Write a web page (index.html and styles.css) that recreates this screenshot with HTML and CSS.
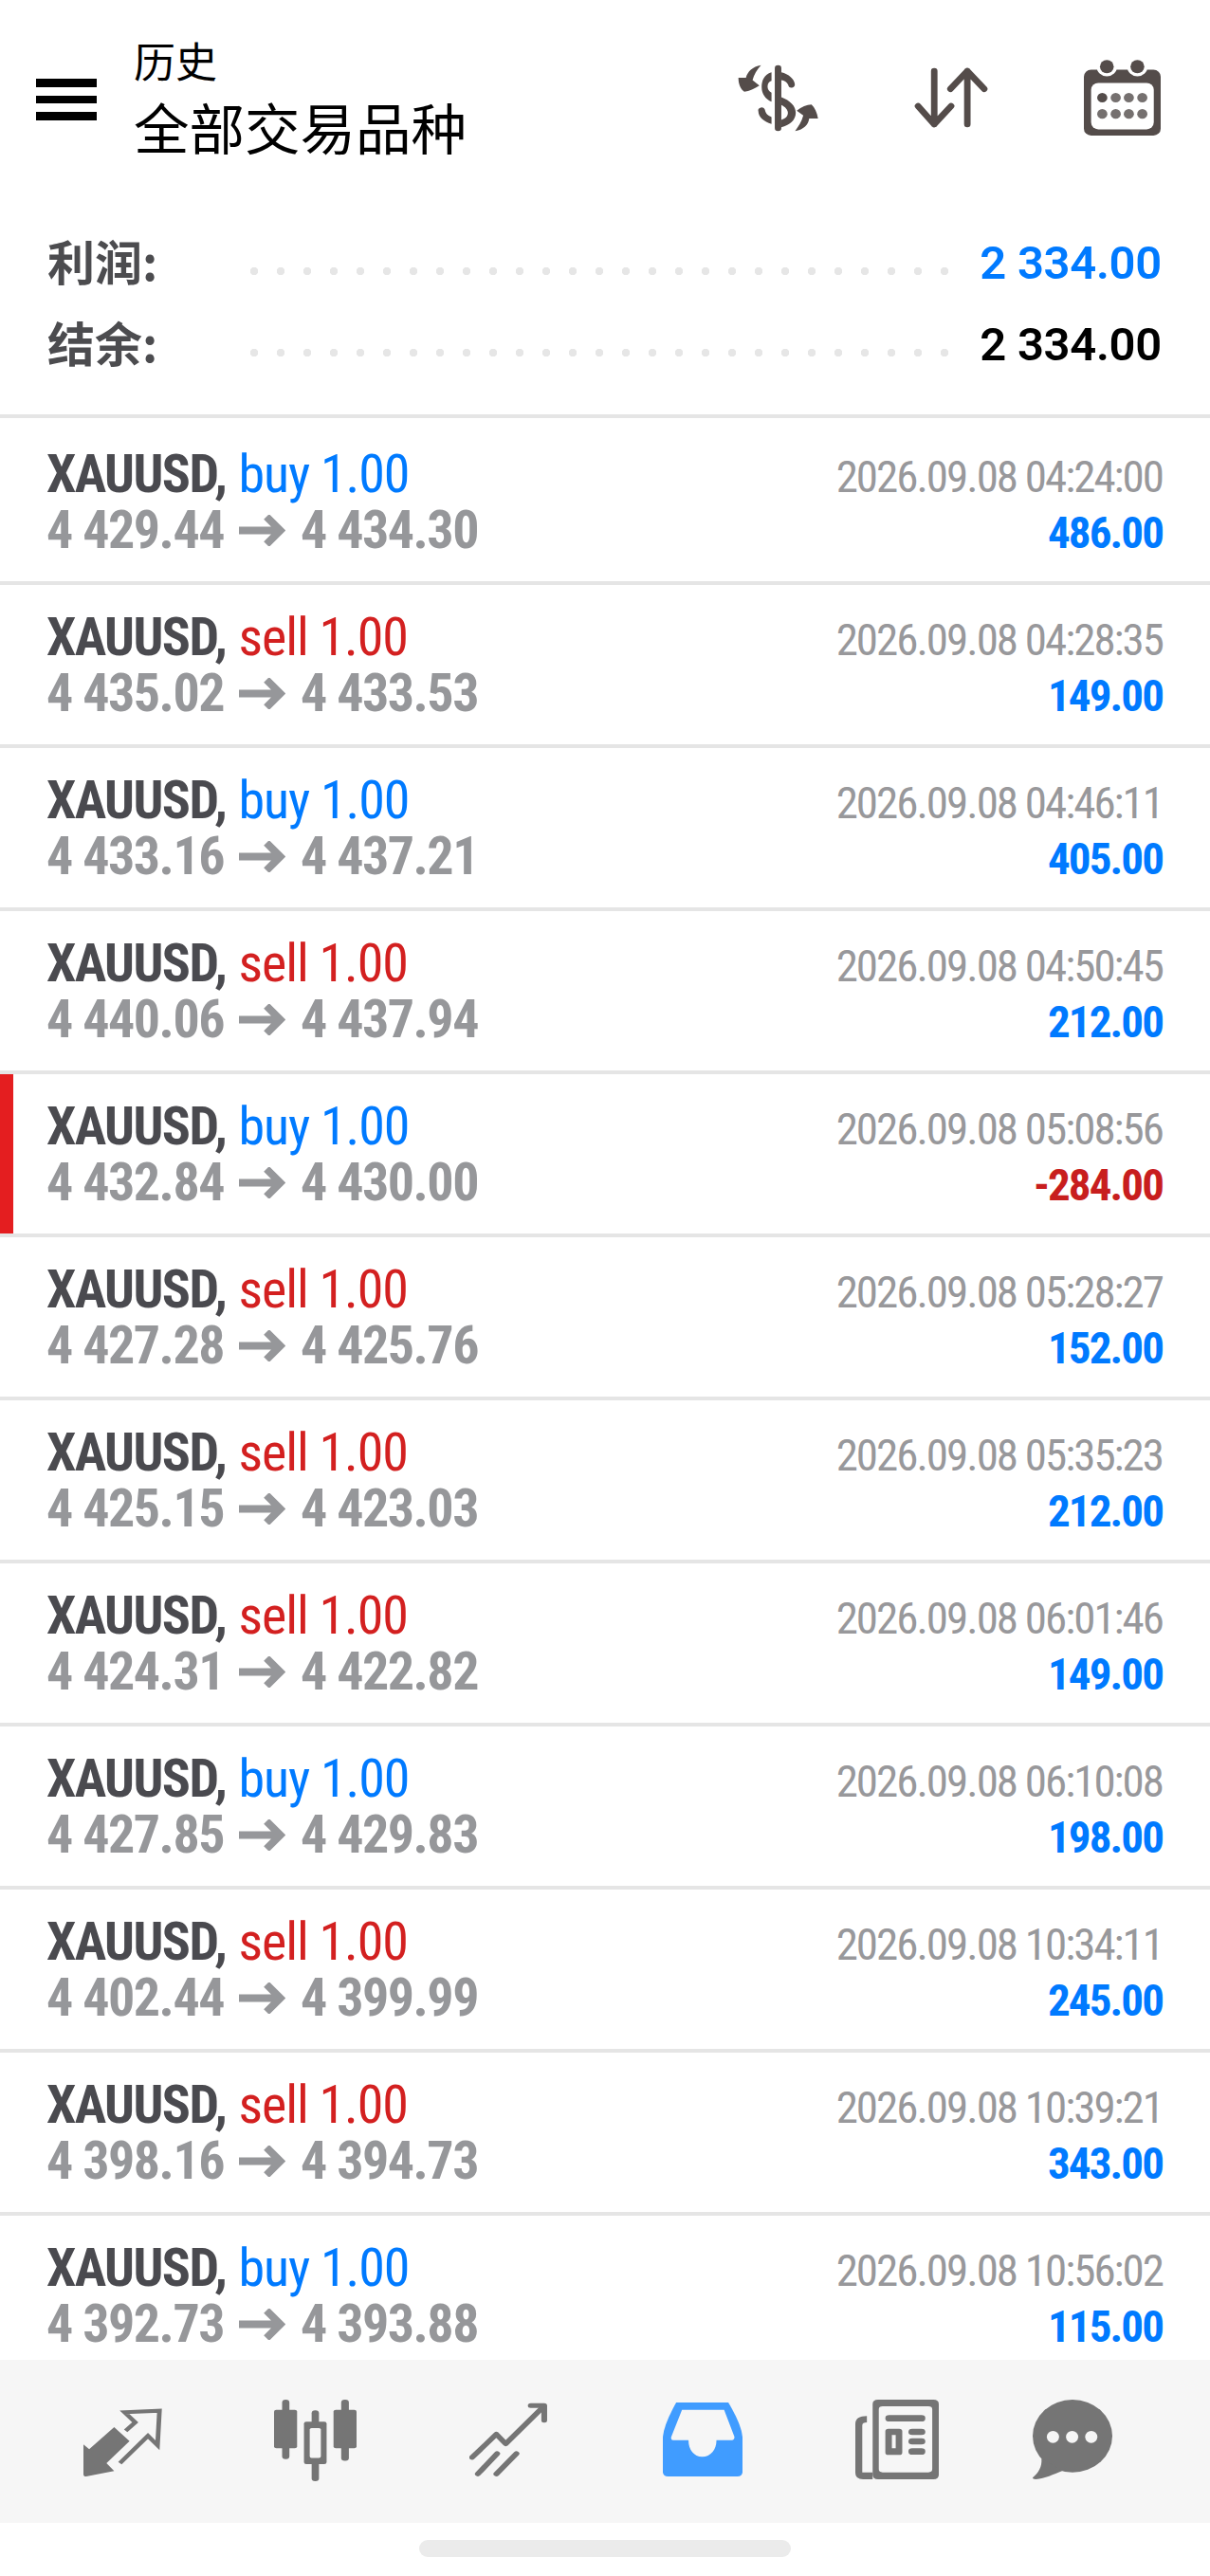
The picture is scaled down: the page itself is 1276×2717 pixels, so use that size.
FILE: index.html
```html
<!DOCTYPE html>
<html lang="zh-CN">
<head>
  <meta charset="UTF-8">
  <meta name="viewport" content="width=device-width, initial-scale=1.0">
  <title>历史</title>
  <link rel="stylesheet" href="styles.css">
</head>
<body>
  <svg class="sprites" width="0" height="0">
    <symbol id="arrow-right" viewBox="0 0 49 33" preserveAspectRatio="none">
      <path d="M0 16.5H42M29 2L43.5 16.5L29 31" fill="none" stroke="#96979a" stroke-width="8"/>
    </symbol>
  </svg>
  <div class="app">
    <header class="header">
      <div class="menu-btn"><span></span><span></span><span></span></div>
      <div class="title">
        <div class="title-small">历史</div>
        <div class="title-big">全部交易品种</div>
      </div>
      <div class="header-icons">
        <svg class="ic-dollar" viewBox="170 118 246 214" preserveAspectRatio="none" fill="#544c4a">
          <rect x="283" y="120" width="20" height="210" rx="10"/>
          <path d="M273 143C250 150 243 170 243 190C243 212 255 228 273 236L273 208C265 203 261 197 261 188C261 178 266 172 273 170Z"/>
          <path d="M303 143C325 148 343 165 344 180A10 10 0 0 1 324 183C320 173 312 170 303 168Z"/>
          <path d="M303 222C330 233 347 250 347 272C347 295 328 312 303 318L303 294C315 291 323 283 323 272C323 262 315 253 303 247Z"/>
          <path d="M273 307C250 300 233 285 233 268A10 10 0 0 1 253 262C255 275 263 281 273 285Z"/>
          <path d="M241 120C215 125 200 140 195 160L172 160C172 180 178 195 190 205C205 203 222 195 236 185L215 168C220 150 228 135 241 120Z"/>
          <path d="M345 330C372 325 385 310 388 290L415 290C412 270 405 255 395 245C380 245 365 252 350 265L370 280C365 300 355 315 345 330Z"/>
        </svg>
        <svg class="ic-sort" viewBox="708 128 228 194" preserveAspectRatio="none" fill="none" stroke="#544c4a" stroke-width="20" stroke-linecap="round" stroke-linejoin="round">
          <path d="M770 140V310M720 252L770 310L822 252"/>
          <path d="M872 310V140M820 197L872 140L924 197"/>
        </svg>
        <svg class="ic-calendar" viewBox="1228 98 234 242" preserveAspectRatio="none">
          <rect x="1228" y="130" width="234" height="210" rx="22" fill="#544c4a"/>
          <rect x="1250" y="172" width="191" height="148" rx="22" fill="#fff"/>
          <circle cx="1298" cy="120" r="31" fill="#fff"/>
          <circle cx="1391" cy="120" r="31" fill="#fff"/>
          <circle cx="1298" cy="120" r="21" fill="#544c4a"/>
          <circle cx="1391" cy="120" r="21" fill="#544c4a"/>
          <g fill="#75706f">
            <circle cx="1284" cy="219" r="15.5" fill="#544c4a"/>
            <circle cx="1325" cy="219" r="15.5"/>
            <circle cx="1365" cy="219" r="15.5"/>
            <circle cx="1406" cy="219" r="15.5"/>
            <circle cx="1284" cy="271" r="15.5"/>
            <circle cx="1325" cy="271" r="15.5"/>
            <circle cx="1365" cy="271" r="15.5"/>
            <circle cx="1406" cy="271" r="15.5"/>
          </g>
        </svg>
      </div>
    </header>

    <section class="summary">
      <div class="sum-row">
        <span class="sum-label">利润:</span>
        <span class="sum-dots"></span>
        <span class="sum-value blue">2 334.00</span>
      </div>
      <div class="sum-row">
        <span class="sum-label">结余:</span>
        <span class="sum-dots"></span>
        <span class="sum-value">2 334.00</span>
      </div>
    </section>

    <main class="list">
      <div class="row">
        <div class="deal">XAUUSD, <span class="buy">buy 1.00</span></div>
        <div class="time">2026.09.08 04:24:00</div>
        <div class="prices">4 429.44<svg class="arrow"><use href="#arrow-right"/></svg>4 434.30</div>
        <div class="profit">486.00</div>
      </div>
      <div class="row">
        <div class="deal">XAUUSD, <span class="sell">sell 1.00</span></div>
        <div class="time">2026.09.08 04:28:35</div>
        <div class="prices">4 435.02<svg class="arrow"><use href="#arrow-right"/></svg>4 433.53</div>
        <div class="profit">149.00</div>
      </div>
      <div class="row">
        <div class="deal">XAUUSD, <span class="buy">buy 1.00</span></div>
        <div class="time">2026.09.08 04:46:11</div>
        <div class="prices">4 433.16<svg class="arrow"><use href="#arrow-right"/></svg>4 437.21</div>
        <div class="profit">405.00</div>
      </div>
      <div class="row">
        <div class="deal">XAUUSD, <span class="sell">sell 1.00</span></div>
        <div class="time">2026.09.08 04:50:45</div>
        <div class="prices">4 440.06<svg class="arrow"><use href="#arrow-right"/></svg>4 437.94</div>
        <div class="profit">212.00</div>
      </div>
      <div class="row row-loss">
        <div class="deal">XAUUSD, <span class="buy">buy 1.00</span></div>
        <div class="time">2026.09.08 05:08:56</div>
        <div class="prices">4 432.84<svg class="arrow"><use href="#arrow-right"/></svg>4 430.00</div>
        <div class="profit loss">-284.00</div>
      </div>
      <div class="row">
        <div class="deal">XAUUSD, <span class="sell">sell 1.00</span></div>
        <div class="time">2026.09.08 05:28:27</div>
        <div class="prices">4 427.28<svg class="arrow"><use href="#arrow-right"/></svg>4 425.76</div>
        <div class="profit">152.00</div>
      </div>
      <div class="row">
        <div class="deal">XAUUSD, <span class="sell">sell 1.00</span></div>
        <div class="time">2026.09.08 05:35:23</div>
        <div class="prices">4 425.15<svg class="arrow"><use href="#arrow-right"/></svg>4 423.03</div>
        <div class="profit">212.00</div>
      </div>
      <div class="row">
        <div class="deal">XAUUSD, <span class="sell">sell 1.00</span></div>
        <div class="time">2026.09.08 06:01:46</div>
        <div class="prices">4 424.31<svg class="arrow"><use href="#arrow-right"/></svg>4 422.82</div>
        <div class="profit">149.00</div>
      </div>
      <div class="row">
        <div class="deal">XAUUSD, <span class="buy">buy 1.00</span></div>
        <div class="time">2026.09.08 06:10:08</div>
        <div class="prices">4 427.85<svg class="arrow"><use href="#arrow-right"/></svg>4 429.83</div>
        <div class="profit">198.00</div>
      </div>
      <div class="row">
        <div class="deal">XAUUSD, <span class="sell">sell 1.00</span></div>
        <div class="time">2026.09.08 10:34:11</div>
        <div class="prices">4 402.44<svg class="arrow"><use href="#arrow-right"/></svg>4 399.99</div>
        <div class="profit">245.00</div>
      </div>
      <div class="row">
        <div class="deal">XAUUSD, <span class="sell">sell 1.00</span></div>
        <div class="time">2026.09.08 10:39:21</div>
        <div class="prices">4 398.16<svg class="arrow"><use href="#arrow-right"/></svg>4 394.73</div>
        <div class="profit">343.00</div>
      </div>
      <div class="row">
        <div class="deal">XAUUSD, <span class="buy">buy 1.00</span></div>
        <div class="time">2026.09.08 10:56:02</div>
        <div class="prices">4 392.73<svg class="arrow"><use href="#arrow-right"/></svg>4 393.88</div>
        <div class="profit">115.00</div>
      </div>
    </main>

    <nav class="nav">
      <svg class="nav-trade" viewBox="215 237 205 220" preserveAspectRatio="none">
        <path d="M215 355L230 370L295 300L335 345L275 415L295 440L222 457Q215 457 215 450Z" fill="#757575"/>
        <path d="M310 415L383 328L408 358L413 248L322 253L350 285L325 312" fill="none" stroke="#757575" stroke-width="12"/>
      </svg>
      <svg class="nav-candles" viewBox="707 213 215 259" preserveAspectRatio="none" fill="#757575">
        <rect x="728" y="213" width="19" height="189" rx="9"/>
        <rect x="707" y="245" width="60" height="122" rx="6"/>
        <rect x="805" y="247" width="19" height="225" rx="9"/>
        <rect x="785" y="283" width="59" height="135" rx="6"/>
        <rect x="800" y="303" width="29" height="95" rx="5" fill="#f6f6f6"/>
        <rect x="882" y="213" width="20" height="194" rx="9"/>
        <rect x="862" y="245" width="60" height="122" rx="6"/>
      </svg>
      <svg class="nav-chart" viewBox="1213 222 204 233" preserveAspectRatio="none" fill="none" stroke="#757575" stroke-width="15" stroke-linecap="round" stroke-linejoin="round">
        <path d="M1220 395L1283 322L1307 352L1405 235"/>
        <path d="M1372 232H1407V278"/>
        <path d="M1235 447L1285 383M1283 447L1335 383"/>
      </svg>
      <svg class="nav-history" viewBox="145 222 208 232" preserveAspectRatio="none">
        <path d="M180 222H316Q350 290 353 330V440Q353 454 339 454H159Q145 454 145 440V330Q148 290 180 222Z" fill="#409cff"/>
        <path d="M195 245H305L332 330Q332 340 325 340H285C285 370 270 392 248 392C226 392 212 370 212 340H172Q165 340 167 330Z" fill="#f6f6f6"/>
      </svg>
      <svg class="nav-news" viewBox="645 213 217 252" preserveAspectRatio="none" fill="#757575">
        <path fill-rule="evenodd" d="M704 213H848Q862 213 862 227V451Q862 465 848 465H704Q690 465 690 451V227Q690 213 704 213ZM716 234Q706 234 706 244V433Q706 443 716 443H835Q845 443 845 433V244Q845 234 835 234Z"/>
        <path d="M675 265V285Q663 285 663 295V443H690V465H665Q645 465 645 445V290Q645 265 675 265Z"/>
        <rect x="723" y="262" width="104" height="20" rx="10"/>
        <path fill-rule="evenodd" d="M731 305H759Q767 305 767 313V380Q767 388 759 388H731Q723 388 723 380V313Q723 305 731 305ZM740 325V367H750V325Z"/>
        <rect x="783" y="305" width="44" height="20" rx="10"/>
        <rect x="783" y="335" width="44" height="20" rx="10"/>
        <rect x="783" y="367" width="44" height="20" rx="10"/>
      </svg>
      <svg class="nav-chat" viewBox="1107 213 208 252" preserveAspectRatio="none">
        <ellipse cx="1211" cy="328" rx="104" ry="115" fill="#757575"/>
        <path d="M1130 400C1132 425 1122 445 1107 460Q1107 465 1115 465C1140 462 1160 450 1185 438Z" fill="#757575"/>
        <ellipse cx="1160" cy="331" rx="16" ry="19" fill="#f6f6f6"/>
        <ellipse cx="1210" cy="331" rx="16" ry="19" fill="#f6f6f6"/>
        <ellipse cx="1260" cy="331" rx="16" ry="19" fill="#f6f6f6"/>
      </svg>
    </nav>
    <div class="home-bar"><span></span></div>
  </div>
</body>
</html>
```

FILE: styles.css
```css
* {
  box-sizing: border-box;
}

body {
  margin: 0;
  background: #fff;
  font-family: Roboto, "Noto Sans CJK SC", sans-serif;
}

.sprites {
  position: absolute;
}

.app {
  width: 1276px;
  height: 2717px;
  display: flex;
  flex-direction: column;
  overflow: hidden;
}

/* header */
.header {
  height: 234px;
  padding: 38px 52px 0 38px;
  display: flex;
  align-items: flex-start;
  flex-shrink: 0;
}

.menu-btn {
  width: 64px;
  margin-top: 45px;
  display: flex;
  flex-direction: column;
  gap: 9px;
}

.menu-btn span {
  height: 8.5px;
  background: #000;
}

.title {
  margin-left: 39px;
  font-family: "Noto Sans CJK SC", sans-serif;
  color: #000;
}

.title-small {
  font-size: 44px;
  line-height: 50px;
}

.title-big {
  margin-top: 9px;
  font-size: 58.5px;
  line-height: 72px;
}

.header-icons {
  margin-left: auto;
  margin-top: 25px;
  height: 80px;
  display: flex;
  align-items: center;
}

.ic-dollar {
  width: 85px;
  height: 71px;
}

.ic-sort {
  width: 78px;
  height: 64px;
  margin-left: 101px;
}

.ic-calendar {
  width: 81px;
  height: 80px;
  margin-left: 101px;
}

/* summary */
.summary {
  height: 207px;
  padding: 0 51px 0 50px;
  border-bottom: 4px solid #e5e5e5;
  flex-shrink: 0;
}

.sum-row {
  height: 86px;
  display: flex;
  align-items: center;
}

.sum-label {
  width: 204px;
  margin-bottom: 6px;
  font-family: "Noto Sans CJK SC", sans-serif;
  font-size: 50px;
  font-weight: 700;
  color: #4c4c4f;
}

.sum-dots {
  width: 756px;
  height: 8px;
  margin-top: 18px;
  background-image: radial-gradient(circle, #e6e6e6 4px, transparent 4.5px);
  background-size: 28px 8px;
}

.sum-value {
  margin-left: auto;
  font-size: 49px;
  font-weight: 600;
  letter-spacing: -0.3px;
  color: #000;
}

.blue {
  color: #007aff;
}

/* deals */
.list {
  flex: 1;
  min-height: 0;
  padding-top: 4px;
  overflow: hidden;
}

.row {
  height: 172px;
  padding: 26px 50px 0 49px;
  border-bottom: 4px solid #e5e5e5;
  display: grid;
  grid-template-columns: 1fr auto;
  grid-auto-rows: 59px;
  align-items: baseline;
  line-height: 59px;
  font-stretch: 75%;
  white-space: nowrap;
}

.row-loss {
  box-shadow: inset 14px 0 0 #e41e20;
}

.deal {
  font-size: 56px;
  font-weight: 700;
  letter-spacing: -1.6px;
  color: #4a4a4f;
}

.deal span {
  margin-left: 2px;
  font-weight: 400;
  letter-spacing: -1.1px;
}

.buy {
  color: #007aff;
}

.sell {
  color: #d32020;
}

.prices {
  font-size: 56px;
  font-weight: 700;
  letter-spacing: -1.5px;
  color: #96979a;
}

.arrow {
  width: 49px;
  height: 33px;
  margin: 0 16px;
  vertical-align: 2px;
}

.time {
  font-size: 47px;
  letter-spacing: -2px;
  color: #98989b;
  text-align: right;
}

.profit {
  font-size: 47px;
  font-weight: 700;
  letter-spacing: -1.9px;
  color: #007aff;
  text-align: right;
}

.profit.loss {
  color: #c81e1e;
}

/* bottom nav */
.nav {
  height: 172px;
  padding: 42px 0 0 88px;
  background: #f6f6f6;
  display: flex;
  align-items: flex-start;
  flex-shrink: 0;
}

.nav-trade {
  width: 83px;
  height: 73px;
  margin-top: 8px;
}

.nav-candles {
  width: 87px;
  height: 86px;
  margin-left: 118px;
}

.nav-chart {
  width: 83px;
  height: 78px;
  margin-left: 119px;
  margin-top: 3px;
}

.nav-history {
  width: 84px;
  height: 78px;
  margin-left: 121px;
  margin-top: 3px;
}

.nav-news {
  width: 88px;
  height: 84px;
  margin-left: 119px;
}

.nav-chat {
  width: 84px;
  height: 84px;
  margin-left: 99px;
}

.home-bar {
  height: 56px;
  padding: 18px 0 0 442px;
  flex-shrink: 0;
}

.home-bar span {
  display: block;
  width: 392px;
  height: 18px;
  border-radius: 9px;
  background: #ebebeb;
}
```
